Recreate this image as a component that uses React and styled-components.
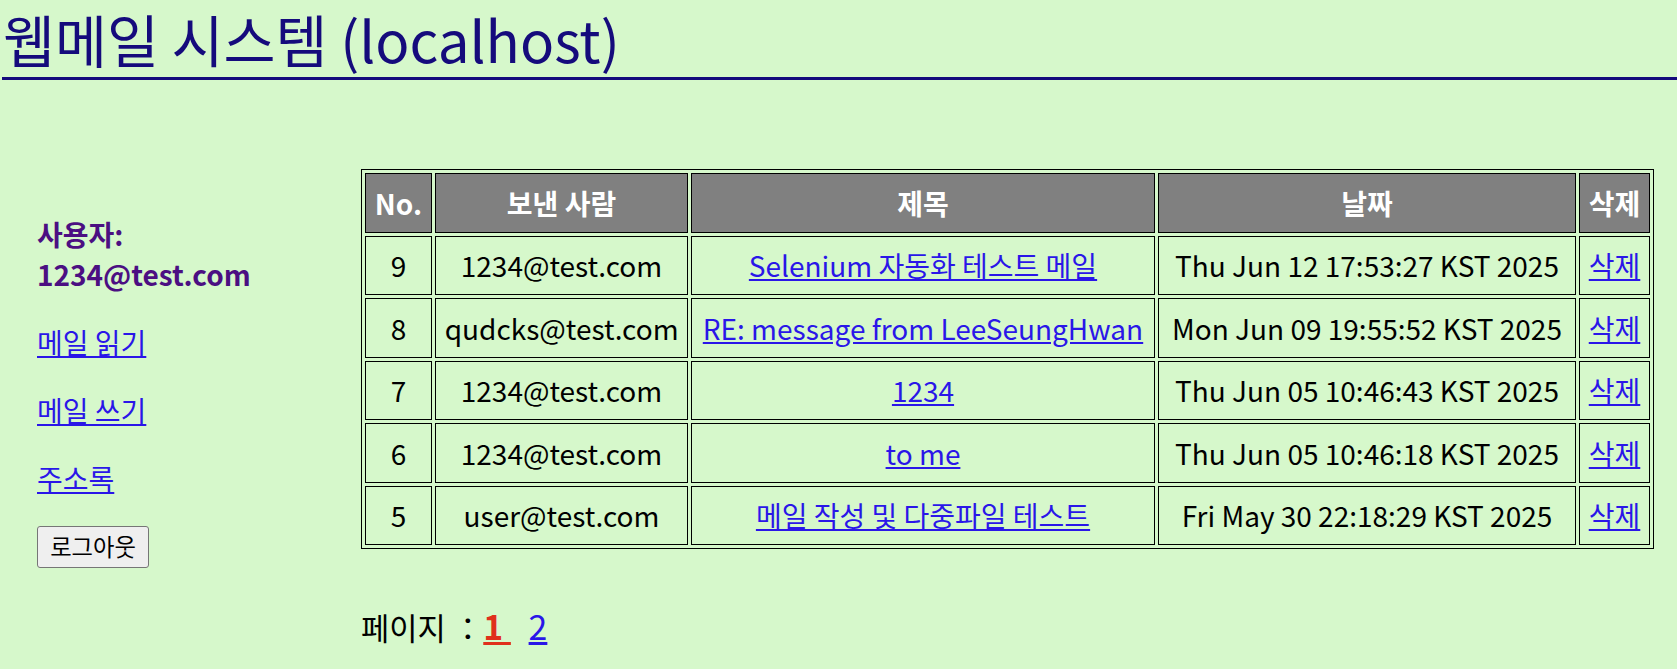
import React from "react";
import styled, { createGlobalStyle } from "styled-components";

const GlobalStyle = createGlobalStyle`
  html, body { margin: 0; padding: 0; }
  body {
    background: #d6f8cb;
    font-family: "Noto Sans CJK KR", "Noto Sans", sans-serif;
    font-size: 28px;
    color: #000;
  }
`;

const Header = styled.header`
  margin-left: 2px;
  border-bottom: 3px solid #150b7c;
`;

const Title = styled.h1`
  margin: 0;
  padding-left: 1px;
  font-size: 56.5px;
  font-weight: 400;
  line-height: 77px;
  color: #150b7c;
  white-space: nowrap;
`;

const Layout = styled.div`
  display: flex;
  align-items: flex-start;
  padding-top: 89px;
`;

const Sidebar = styled.nav`
  flex: 0 0 361px;
  box-sizing: border-box;
  padding-left: 37px;
  margin-top: 45px;
  display: flex;
  flex-direction: column;
  align-items: flex-start;
  gap: 28px;
`;

const UserInfo = styled.p`
  margin: 0;
  font-weight: 700;
  color: #4b0f82;
  line-height: 40px;
  white-space: nowrap;
`;

const NavLink = styled.a`
  color: #2a16e8;
  text-decoration: underline;
  line-height: 40px;
  cursor: pointer;
`;

const LogoutButton = styled.button`
  width: 112px;
  height: 42px;
  padding: 0;
  font-family: "Noto Sans CJK KR", "Noto Sans", sans-serif;
  font-size: 23.3px;
  line-height: 1;
  color: #000;
  background: #efefef;
  border: 1px solid #767676;
  border-radius: 3px;
  cursor: pointer;
`;

const Main = styled.main`
  flex: 1;
  min-width: 0;
  padding-right: 23px;
`;

const MailTable = styled.table`
  width: 100%;
  table-layout: fixed;
  border: 1px solid #000;
  border-spacing: 3px;
`;

const HeadCell = styled.th`
  box-sizing: border-box;
  width: ${(p) => p.$w}px;
  padding: 8.75px;
  border: 1px solid #000;
  background: #808080;
  color: #fff;
  font-weight: 700;
  line-height: 40px;
  text-align: center;
  white-space: nowrap;
`;

const Cell = styled.td`
  padding: 8.75px;
  border: 1px solid #000;
  line-height: 40px;
  text-align: center;
  white-space: nowrap;
`;

const CellLink = styled.a`
  color: #2a16e8;
  text-decoration: underline;
  cursor: pointer;
`;

const Pagination = styled.p`
  margin: 57px 0 0;
  font-size: 30.7px;
  line-height: 40px;
  white-space: nowrap;
`;

const PageLink = styled.a`
  font-size: 1.1em;
  color: ${(p) => (p.$active ? "#e0301c" : "#2a16e8")};
  font-weight: ${(p) => (p.$active ? 700 : 400)};
  text-decoration: underline;
  cursor: pointer;
  & + & {
    margin-left: 4px;
  }
`;

const columns = [
  { label: "No.", w: 67 },
  { label: "보낸 사람", w: 253 },
  { label: "제목", w: 464 },
  { label: "날짜", w: 418 },
  { label: "삭제", w: 71 },
];

const mails = [
  { no: 9, from: "1234@test.com", subject: "Selenium 자동화 테스트 메일", date: "Thu Jun 12 17:53:27 KST 2025" },
  { no: 8, from: "qudcks@test.com", subject: "RE: message from LeeSeungHwan", date: "Mon Jun 09 19:55:52 KST 2025" },
  { no: 7, from: "1234@test.com", subject: "1234", date: "Thu Jun 05 10:46:43 KST 2025" },
  { no: 6, from: "1234@test.com", subject: "to me", date: "Thu Jun 05 10:46:18 KST 2025" },
  { no: 5, from: "user@test.com", subject: "메일 작성 및 다중파일 테스트", date: "Fri May 30 22:18:29 KST 2025" },
];

export default function App() {
  return (
    <>
      <GlobalStyle />
      <Header>
        <Title>웹메일 시스템 (localhost)</Title>
      </Header>
      <Layout>
        <Sidebar>
          <UserInfo>
            사용자:
            <br />
            1234@test.com
          </UserInfo>
          <NavLink>메일 읽기</NavLink>
          <NavLink>메일 쓰기</NavLink>
          <NavLink>주소록</NavLink>
          <LogoutButton type="button">로그아웃</LogoutButton>
        </Sidebar>
        <Main>
          <MailTable>
            <thead>
              <tr>
                {columns.map((c) => (
                  <HeadCell key={c.label} $w={c.w}>
                    {c.label}
                  </HeadCell>
                ))}
              </tr>
            </thead>
            <tbody>
              {mails.map((m) => (
                <tr key={m.no}>
                  <Cell>{m.no}</Cell>
                  <Cell>{m.from}</Cell>
                  <Cell>
                    <CellLink>{m.subject}</CellLink>
                  </Cell>
                  <Cell>{m.date}</Cell>
                  <Cell>
                    <CellLink>삭제</CellLink>
                  </Cell>
                </tr>
              ))}
            </tbody>
          </MailTable>
          <Pagination>
            페이지 ：<PageLink $active>1&nbsp;</PageLink>&nbsp;&nbsp;<PageLink>2</PageLink>
          </Pagination>
        </Main>
      </Layout>
    </>
  );
}
